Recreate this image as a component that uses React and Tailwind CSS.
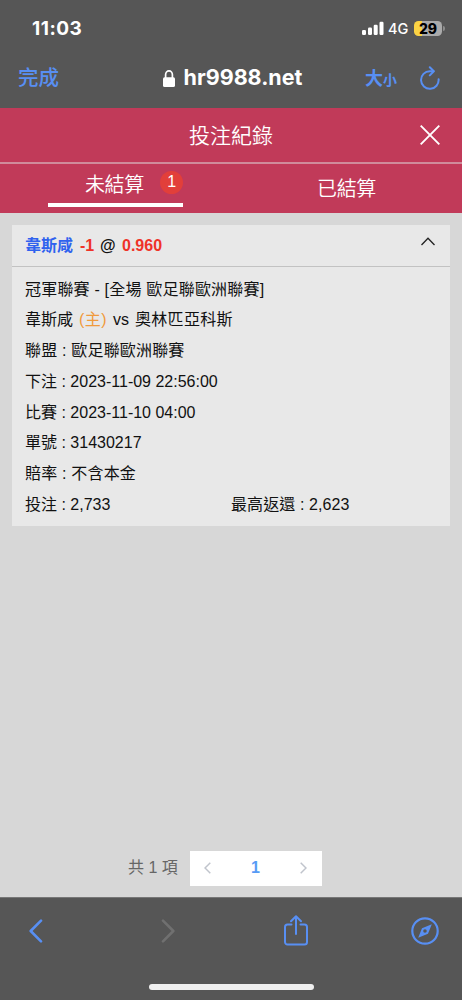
import { useState } from "react";

const bet = {
  team: "韋斯咸",
  handicap: "-1",
  odds: "0.960",
};

const details = [
  { label: "聯盟", value: "歐足聯歐洲聯賽", cjk: true },
  { label: "下注", value: "2023-11-09 22:56:00" },
  { label: "比賽", value: "2023-11-10 04:00" },
  { label: "單號", value: "31430217" },
  { label: "賠率", value: "不含本金", cjk: true },
];

function StatusBar() {
  return (
    <div className="h-14 pl-8 pr-[17px] flex items-center justify-between text-white font-[Inter,sans-serif]">
      <span className="text-[19px] font-bold leading-none tracking-[0.5px]">11:03</span>
      <div className="flex items-center">
        <svg width="22" height="14" viewBox="0 0 22 14" fill="currentColor">
          <rect x="0" y="9" width="4" height="5" rx="1.2" />
          <rect x="6" y="6.5" width="4" height="7.5" rx="1.2" />
          <rect x="11.7" y="3.8" width="4" height="10.2" rx="1.2" />
          <rect x="17.5" y="0.8" width="4" height="13.2" rx="1.2" />
        </svg>
        <span className="ml-[4px] w-[21px] text-[14.5px] font-medium leading-none mt-[2px]">4G</span>
        <span className="ml-[5px] w-[28px] h-[15px] rounded-[4.5px] bg-[linear-gradient(to_right,#fbd344_29%,#aaaaaa_29%)] text-black text-[14px] font-extrabold leading-[15px] text-center">
          29
        </span>
        <span className="ml-px w-[2px] h-[5px] rounded-r-full bg-[#8d8d8d]" />
      </div>
    </div>
  );
}

function AddressBar() {
  return (
    <div className="h-[52px] pl-[18px] pr-[22px] grid grid-cols-[1fr_auto_1fr] items-center pb-2 text-[#588ff3]">
      <span className="text-[20.5px] leading-none font-medium mt-px">完成</span>
      <div className="flex items-center text-white gap-[9px] ml-[7px]">
        <svg width="12" height="17" viewBox="0 0 12 17">
          <path d="M2.6 8V4.8a3.4 3.9 0 0 1 6.8 0V8" fill="none" stroke="currentColor" strokeWidth="1.7" />
          <rect x="0" y="7.3" width="12" height="9.7" rx="1.6" fill="currentColor" />
        </svg>
        <span className="font-[Inter,sans-serif] font-bold text-[21.5px] leading-none">hr9988.net</span>
      </div>
      <div className="flex items-center justify-end">
        <span className="flex items-baseline font-bold leading-none mr-[23px] mt-[2px]">
          <span className="text-[18px]">大</span>
          <span className="text-[14px]">小</span>
        </span>
        <svg width="20" height="24" viewBox="0 0 20 24" fill="none" stroke="currentColor" strokeWidth="2" strokeLinecap="round" strokeLinejoin="round">
          <path d="M18.6 13.2A8.8 8.8 0 1 1 9.8 5.2H13.5" />
          <path d="M9.8 1.2l4 4-4 4.2" />
        </svg>
      </div>
    </div>
  );
}

function Tabs({ active, onChange }) {
  return (
    <div className="h-[49px] grid grid-cols-2 text-[20px] leading-none tracking-[-0.3px]">
      <button onClick={() => onChange("open")} className="flex justify-center">
        <span
          className={`w-[135px] h-[43px] flex items-start justify-end gap-[16px] border-b-4 ${
            active === "open" ? "border-white" : "border-transparent"
          }`}
        >
          <span className="mt-[11px] font-[350]">未結算</span>
          <span className="mt-[7px] size-[23px] rounded-full bg-[#e23f3a] text-[16px] leading-[22px] text-center">1</span>
        </span>
      </button>
      <button onClick={() => onChange("settled")} className="flex justify-center pt-[15px] font-[350]">
        已結算
      </button>
    </div>
  );
}

function BetCard() {
  const [open, setOpen] = useState(true);

  return (
    <div className="mx-3 bg-[#e8e8e8] text-[#111] text-[16px]">
      <div className="h-[42px] pl-[13px] pr-[15px] flex items-center border-b border-[#c2c2c2] font-bold">
        <span className="text-[#2f62ee] w-[55px]">{bet.team}</span>
        <span className="text-[#ef3328] w-5">{bet.handicap}</span>
        <span className="w-[22px]">@</span>
        <span className="text-[#ef3328]">{bet.odds}</span>
        <button onClick={() => setOpen(!open)} className="ml-auto -mt-2">
          <svg width="14" height="9" viewBox="0 0 14 9" fill="none" stroke="#222" strokeWidth="1.3">
            <path d="M0.5 8L7 1.2 13.5 8" />
          </svg>
        </button>
      </div>
      {open && (
        <div className="px-[13px] pt-[7.5px] pb-[5.5px] leading-[30.8px]">
          <p className="tracking-[0.2px]">冠軍聯賽 - [全場 歐足聯歐洲聯賽]</p>
          <p className="flex">
            <span className="w-[54px]">韋斯咸</span>
            <span className="w-[34px] text-[#f09a3c] tracking-[0.4px]">(主)</span>
            <span className="w-[22px]">vs</span>
            <span className="tracking-[0.3px]">奧林匹亞科斯</span>
          </p>
          {details.map((d) => (
            <p key={d.label} className={d.cjk ? "tracking-[0.18px]" : ""}>
              {d.label} : {d.value}
            </p>
          ))}
          <div className="grid grid-cols-2">
            <p>投注 : 2,733</p>
            <p className="tracking-[0.1px]">最高返還 : 2,623</p>
          </div>
        </div>
      )}
    </div>
  );
}

function Pagination() {
  return (
    <div className="mt-auto mb-[11.5px] ml-32 flex items-center text-[16px]">
      <span className="w-[62px] text-[#666] whitespace-nowrap">共 1 項</span>
      <div className="w-[132px] h-[35px] pl-[14px] pr-[15px] bg-white flex items-center justify-between">
        <svg width="7" height="12" viewBox="0 0 7 12" fill="none" stroke="#c0c4cc" strokeWidth="1.5">
          <path d="M6.3 0.7L1 6l5.3 5.3" />
        </svg>
        <span className="text-[#579bf5] font-bold">1</span>
        <svg width="7" height="12" viewBox="0 0 7 12" fill="none" stroke="#c0c4cc" strokeWidth="1.5">
          <path d="M0.7 0.7L6 6 0.7 11.3" />
        </svg>
      </div>
    </div>
  );
}

function BottomBar() {
  return (
    <div className="h-[103px] bg-[#565656] border-t border-[#777] text-[#588ff3] flex flex-col justify-between pb-[10px]">
      <div className="h-[66px] pl-[29px] flex items-center">
        <svg width="14" height="24" viewBox="0 0 14 24" fill="none" stroke="currentColor" strokeWidth="2.6" strokeLinecap="round" strokeLinejoin="round">
          <path d="M12 1.7L1.7 12 12 22.3" />
        </svg>
        <svg className="ml-[118px]" width="14" height="24" viewBox="0 0 14 24" fill="none" stroke="#707070" strokeWidth="2.6" strokeLinecap="round" strokeLinejoin="round">
          <path d="M2 1.7L12.3 12 2 22.3" />
        </svg>
        <svg className="ml-[109px] -mt-px" width="24" height="31" viewBox="0 0 24 31" fill="none" stroke="currentColor" strokeWidth="2" strokeLinecap="round" strokeLinejoin="round">
          <path d="M7.5 9.5H3.5A2.5 2.5 0 0 0 1 12V27a2.5 2.5 0 0 0 2.5 2.5h17A2.5 2.5 0 0 0 23 27V12a2.5 2.5 0 0 0-2.5-2.5h-4" />
          <path d="M12 19V1.5M7 6.3l5-5 5 5" />
        </svg>
        <svg className="ml-[103px]" width="28" height="28" viewBox="0 0 28 28">
          <circle cx="14" cy="14" r="12.7" fill="none" stroke="currentColor" strokeWidth="2.2" />
          <path fillRule="evenodd" d="M20.8 7.2L17 16.8 7.2 20.8 11 11.2zM14 12.2a1.8 1.8 0 1 0 0 3.6 1.8 1.8 0 0 0 0-3.6z" fill="currentColor" />
        </svg>
      </div>
      <div className="w-[165px] h-[6px] mx-auto rounded-full bg-[#efefef]" />
    </div>
  );
}

export default function App() {
  const [tab, setTab] = useState("open");

  return (
    <div className="w-[462px] h-[1000px] overflow-hidden flex flex-col bg-[#d7d7d7] font-['Liberation_Sans','Noto_Sans_CJK_TC',sans-serif]">
      <div className="bg-[#565656]">
        <StatusBar />
        <AddressBar />
      </div>

      <div className="bg-[#c13a59] text-white">
        <div className="h-[56px] border-b-2 border-[#d08b9b] grid grid-cols-[1fr_auto_1fr] items-center px-5">
          <h1 className="col-start-2 text-[21px] leading-none font-[350] mt-px">投注紀錄</h1>
          <button className="justify-self-end">
            <svg width="24" height="20" viewBox="0 0 24 20" fill="none" stroke="currentColor" strokeWidth="1.9">
              <path d="M2.7 0.7l18.6 18.6M21.3 0.7L2.7 19.3" />
            </svg>
          </button>
        </div>
        <Tabs active={tab} onChange={setTab} />
      </div>

      <div className="flex-1 pt-3 flex flex-col">
        <BetCard />
        <Pagination />
      </div>

      <BottomBar />
    </div>
  );
}
